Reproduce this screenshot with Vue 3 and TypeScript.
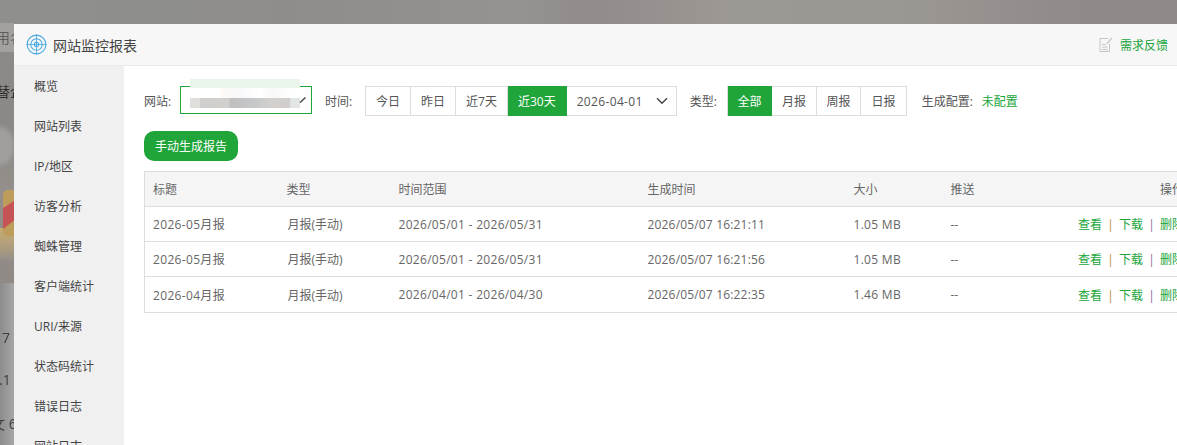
<script setup lang="ts">
const menu = ['概览', '网站列表', 'IP/地区', '访客分析', '蜘蛛管理', '客户端统计', 'URI/来源', '状态码统计', '错误日志', '网站日志']
const times = ['今日', '昨日', '近7天', '近30天']
const types = ['全部', '月报', '周报', '日报']
const rows = [
  { title: '2026-05月报', type: '月报(手动)', range: '2026/05/01 - 2026/05/31', time: '2026/05/07 16:21:11', size: '1.05 MB' },
  { title: '2026-05月报', type: '月报(手动)', range: '2026/05/01 - 2026/05/31', time: '2026/05/07 16:21:56', size: '1.05 MB' },
  { title: '2026-04月报', type: '月报(手动)', range: '2026/04/01 - 2026/04/30', time: '2026/05/07 16:22:35', size: '1.46 MB' },
]
</script>

<template>
  <div class="page">
    <div class="backdrop">
      <div class="bd-top"></div>
      <div class="bd-search"></div>
      <div class="bd-circle"></div>
      <div class="bd-glow"></div>
      <div class="bd-card"></div>
      <div class="bd-tag"></div>
      <div class="bd-band"></div>
      <span class="bd-text t1">用名</span>
      <span class="bd-text t2">替企</span>
      <span class="bd-text t3">7</span>
      <span class="bd-text t4">.1</span>
      <span class="bd-text t5">文 6</span>
    </div>
    <section class="dialog">
      <header class="head">
        <div class="brand">
          <svg class="logo" viewBox="0 0 22 22" fill="none" stroke="#4aaae0">
            <circle cx="11" cy="11" r="9.8" stroke-width="1.2" />
            <circle cx="11" cy="11" r="6" stroke-width="1.1" />
            <circle cx="11" cy="11" r="2.3" stroke-width="1.1" />
            <path d="M11 0.5V21.5M0.5 11H21.5" stroke-width="0.9" />
          </svg>
          <span>网站监控报表</span>
        </div>
        <div class="feedback">
          <svg class="note" viewBox="0 0 14 16" fill="none" stroke="#c4c4c4">
            <path d="M10.5 6.5V14.5H1V1.5H9" stroke-width="1" />
            <path d="M3 7.5H7M3 10H8.5M3 12.5H8.5" stroke-width="1" />
            <path d="M8 6.5L12.8 1" stroke-width="1.2" />
          </svg>
          <span>需求反馈</span>
        </div>
      </header>
      <div class="body">
        <nav class="side">
          <a v-for="m in menu" :key="m" class="side-item">{{ m }}</a>
        </nav>
        <main class="main">
          <div class="filters">
            <span class="label">网站:</span>
            <div class="select">
              <div class="mask-top"></div>
              <div class="mask-glow"></div>
              <div class="mask-text"></div>
              <svg class="tick" viewBox="0 0 8 8" fill="none" stroke="#444">
                <path d="M1 6.5L6.5 1.5" stroke-width="1.4" />
              </svg>
            </div>
            <span class="label time-label">时间:</span>
            <div class="group">
              <button v-for="t in times" :key="t" class="seg" :class="{ on: t === '近30天' }">{{ t }}</button>
              <div class="date">
                <span>2026-04-01</span>
                <svg class="chev" viewBox="0 0 12 8" fill="none" stroke="#444">
                  <path d="M1 1.2L6 6.2L11 1.2" stroke-width="1.4" />
                </svg>
              </div>
            </div>
            <span class="label type-label">类型:</span>
            <div class="group">
              <button v-for="t in types" :key="t" class="seg type" :class="{ on: t === '全部' }">{{ t }}</button>
            </div>
            <span class="label cfg-label">生成配置:</span>
            <span class="cfg">未配置</span>
          </div>
          <button class="gen">手动生成报告</button>
          <table class="table">
            <colgroup>
              <col class="c1" /><col class="c2" /><col class="c3" /><col class="c4" /><col class="c5" /><col class="c6" /><col class="c7" />
            </colgroup>
            <thead>
              <tr>
                <th>标题</th><th>类型</th><th>时间范围</th><th>生成时间</th><th>大小</th><th>推送</th><th class="right">操作</th>
              </tr>
            </thead>
            <tbody>
              <tr v-for="(r, i) in rows" :key="i">
                <td class="n1">{{ r.title }}</td>
                <td class="kind">{{ r.type }}</td>
                <td class="n2">{{ r.range }}</td>
                <td class="n3">{{ r.time }}</td>
                <td class="n2">{{ r.size }}</td>
                <td>--</td>
                <td class="right ops">
                  <a>查看</a><i>|</i><a>下载</a><i class="b">|</i><a>删除</a>
                </td>
              </tr>
            </tbody>
          </table>
        </main>
      </div>
    </section>
  </div>
</template>

<style>
html, body { margin: 0; overflow: hidden; }
</style>

<style scoped>
.page {
  position: relative;
  width: 1177px;
  height: 445px;
  overflow: hidden;
  background: #8d8a88;
  font-family: "Open Sans", "Noto Sans CJK SC", sans-serif;
  font-size: 12px;
}
.backdrop { position: absolute; inset: 0; background: linear-gradient(#8c8a88 0, #8b8987 130px, #948f8a 190px, #8f8a85 283px, #9c9c9c 445px); }
.bd-top { position: absolute; left: 0; right: 0; top: 0; height: 24px; background: linear-gradient(90deg, #8f8f8e, #8e8d8c 25%, #949392 44%, #918b89 50%, #9c9894 62%, #9a9692 78%, #908b89 90%, #8f8a87); }
.bd-search { position: absolute; left: 0; top: 23px; width: 14px; height: 29px; background: #a2a1a0; }
.bd-circle { position: absolute; left: -14px; top: 127px; width: 28px; height: 38px; border-radius: 50%; background: #a09f9e; filter: blur(2px); }
.bd-glow { position: absolute; left: 0; top: 228px; width: 14px; height: 32px; background: linear-gradient(#c9ab6f, #a89a80 70%, #948f8a); }
.bd-text { position: absolute; color: #3e3d3b; font-size: 14px; line-height: 20px; white-space: nowrap; filter: blur(.4px); }
.t1 { left: -4px; top: 28px; color: #605e5c; }
.t2 { left: -4px; top: 82px; color: #2e2d2b; }
.t3 { left: 2px; top: 328px; }
.t4 { left: -1px; top: 370px; }
.t5 { left: -9px; top: 414px; }
.bd-card { position: absolute; left: 3px; top: 190px; width: 20px; height: 46px; border-radius: 5px; background: #bd9c5c; filter: blur(.6px); }
.bd-tag { position: absolute; left: 3px; top: 201px; width: 11px; height: 28px; background: #c65455; clip-path: polygon(0 25%, 100% 0, 100% 70%, 0 100%); }
.bd-band { position: absolute; left: 0; top: 283px; width: 14px; height: 162px; background: linear-gradient(90deg, #8d8c8c, #a6a6a6); }

.dialog {
  position: absolute;
  left: 14px;
  top: 24px;
  width: 1200px;
  height: 460px;
  background: #fff;
  color: #333;
  display: flex;
  flex-direction: column;
}
.head {
  height: 41px;
  flex: none;
  background: #f7f7f7;
  border-bottom: 1px solid #e9e9e9;
  display: flex;
  align-items: center;
  justify-content: space-between;
  padding: 0 0 0 12px;
}
.brand { display: flex; align-items: center; gap: 6px; font-size: 14px; color: #444; }
.logo { width: 21px; height: 21px; }
.feedback { display: flex; align-items: center; gap: 7px; color: #20a53a; margin-right: 46px; }
.note { width: 14px; height: 16px; }
.body { flex: 1; display: flex; min-height: 0; }
.side { width: 110px; flex: none; background: #f0f0f0; overflow: hidden; }
.side-item { display: flex; align-items: center; height: 40px; padding-left: 20px; color: #444; }
.main { flex: 1; padding: 20px 0 0 20px; min-width: 0; }
.filters { display: flex; align-items: center; height: 30px; }
.label { color: #555; white-space: nowrap; min-width: 30px; }
.select {
  position: relative;
  width: 130px;
  height: 26px;
  margin: 0 0 2px 6px;
  border: 1px solid #20a53a;
  background: #fff;
}
.mask-top { position: absolute; left: 9px; top: -8px; width: 110px; height: 9px; background: #e9f4ea; }
.mask-glow { position: absolute; left: 40px; top: 1px; width: 70px; height: 10px; background: linear-gradient(90deg, #fdf9f6, #f8f9fb 30%, #fff 55%, #f9f8f8 75%, #fff); }
.mask-text {
  position: absolute;
  left: 9px;
  top: 11px;
  width: 110px;
  height: 10px;
  background: linear-gradient(90deg, #e0dfdc 0, #e0dfdc 9%, #d0cfcd 9%, #d2cfcc 35%, #bfbfc0 37%, #c6c9ca 60%, #d3d0cd 75%, #d0cccb 90%, #e2e6e6 92%);
  filter: blur(.5px);
}
.tick { position: absolute; right: 4px; top: 9px; width: 8px; height: 8px; }
.time-label { margin-left: 13px; }
.group { display: flex; height: 30px; margin-left: 10px; border: 1px solid #ddd; box-sizing: border-box; }
.seg {
  height: 28px;
  padding: 0 10px;
  border: 0;
  border-right: 1px solid #ddd;
  background: #fff;
  color: #555;
  font: inherit;
  white-space: nowrap;
}
.group > .seg:last-child { border-right: 0; }
.seg.on { background: #20a53a; color: #fff; border-color: #20a53a; }
.group > .seg.on { margin: -1px 0; height: 30px; }
.seg.type { width: 44.5px; padding: 0; }
.date { width: 109px; display: flex; align-items: center; justify-content: space-between; padding: 0 8px 0 10px; box-sizing: border-box; color: #555; letter-spacing: .35px; }
.chev { width: 12px; height: 8px; }
.type-label { margin-left: 13px; }
.type-label + .group { margin-left: 7px; }
.cfg-label { margin-left: 15px; min-width: 56px; }
.cfg { margin-left: 4px; color: #20a53a; }
.gen {
  display: block;
  margin-top: 15px;
  width: 94px;
  height: 30px;
  padding: 0;
  border: 0;
  border-radius: 10px;
  background: #20a53a;
  color: #fff;
  font: inherit;
}
.table {
  margin-top: 10px;
  width: 1051px;
  table-layout: fixed;
  border-collapse: collapse;
  border: 1px solid #ddd;
  color: #666;
}
.c1 { width: 134px; } .c2 { width: 112px; } .c3 { width: 249px; } .c4 { width: 206px; }
.c5 { width: 97px; } .c6 { width: 100px; } .c7 { width: auto; }
th, td { height: 35px; padding: 0 8px; box-sizing: border-box; text-align: left; font-weight: 400; border-top: 1px solid #ddd; white-space: nowrap; }
th { background: #f5f5f5; }
tbody tr:last-child td { height: 36px; }
td.kind { padding-left: 9px; }
.n1 { letter-spacing: .33px; }
.n2 { letter-spacing: .3px; }
.n3 { letter-spacing: .17px; }
.right { text-align: right; padding-right: 10px; }
.ops a { color: #20a53a; }
.ops i { font-style: normal; color: #c08a40; margin: 0 5.2px; }
.ops i.b { color: #8a6a9a; }
</style>
